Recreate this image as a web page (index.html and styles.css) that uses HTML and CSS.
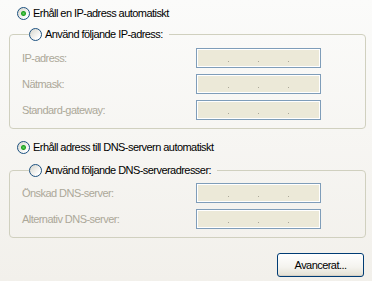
FILE: index.html
```html
<!DOCTYPE html>
<html lang="sv">
<head>
  <meta charset="UTF-8" />
  <title>Egenskaper för Internet Protocol (TCP/IP)</title>
  <link rel="stylesheet" href="styles.css">
</head>
<body>
  <div class="page">
    <label class="opt top"><input type="radio" name="ip" checked> Erhåll en IP-adress automatiskt</label>

    <fieldset class="group first">
      <legend><label class="opt"><input type="radio" name="ip"> Använd följande IP-adress:</label></legend>
      <div class="row"><span class="lbl">IP-adress:</span><span class="ipbox"><i></i><i></i><i></i></span></div>
      <div class="row"><span class="lbl">Nätmask:</span><span class="ipbox"><i></i><i></i><i></i></span></div>
      <div class="row"><span class="lbl">Standard-gateway:</span><span class="ipbox"><i></i><i></i><i></i></span></div>
    </fieldset>

    <label class="opt mid"><input type="radio" name="dns" checked> Erhåll adress till DNS-servern automatiskt</label>

    <fieldset class="group second">
      <legend><label class="opt"><input type="radio" name="dns"> Använd följande DNS-serveradresser:</label></legend>
      <div class="row"><span class="lbl">Önskad DNS-server:</span><span class="ipbox"><i></i><i></i><i></i></span></div>
      <div class="row"><span class="lbl">Alternativ DNS-server:</span><span class="ipbox"><i></i><i></i><i></i></span></div>
    </fieldset>

    <div class="actions">
      <button class="btn">Avancerat...</button>
    </div>
  </div>
</body>
</html>
```

FILE: styles.css
```css
html, body {
  margin: 0;
  height: 100%;
}
body {
  font-family: "Liberation Sans", Arial, sans-serif;
  font-size: 11px;
  letter-spacing: -0.55px;
  color: #000;
  background: linear-gradient(#fbfbfa, #f2f0eb);
}
.page {
  width: 372px;
  height: 281px;
  box-sizing: border-box;
  padding: 7px 6px 0 9px;
}
.opt {
  display: flex;
  align-items: center;
  height: 13px;
  line-height: 13px;
  white-space: nowrap;
}
.opt.top, .opt.mid {
  margin-left: 8px;
}
.opt.mid {
  margin-top: 12px;
}
.opt input {
  appearance: none;
  -webkit-appearance: none;
  width: 13px;
  height: 13px;
  margin: 0 3px 0 0;
  box-sizing: border-box;
  border: 1px solid #1c5180;
  border-radius: 50%;
  background: linear-gradient(135deg, #d6d5cc, #fff 80%);
}
.opt input:checked {
  background: radial-gradient(circle, #5fd35f 0, #21a121 2px, transparent 3px),
              linear-gradient(135deg, #d6d5cc, #fff 80%);
}

/* grupprutor */
.group {
  margin: 8px 0 0 0;
  padding: 7px 0 8px 12px;
  border: 1px solid #d0d0bf;
  border-radius: 4px;
  min-width: 0;
}
.group legend {
  margin-left: 7px;
  padding: 0 6px 0 0;
  height: 13px;
}
.group.second {
  margin-top: 10px;
  padding-top: 6px;
}
.row {
  display: grid;
  grid-template-columns: 174px 125px;
  align-items: center;
}
.row + .row {
  margin-top: 6px;
}
.lbl {
  color: #aca899;
}
.ipbox {
  display: flex;
  gap: 29px;
  height: 20px;
  box-sizing: border-box;
  padding: 12px 0 0 31px;
  border: 1px solid #7f9db9;
  background: #ece9d8;
  box-shadow: inset 0 0 0 1px #fff;
}
.ipbox i {
  width: 1px;
  height: 1px;
  background: #aca899;
}

/* knapp */
.actions {
  display: flex;
  justify-content: flex-end;
  margin-top: 15px;
  padding-right: 2px;
}
.btn {
  width: 87px;
  height: 24px;
  padding: 0;
  font: inherit;
  letter-spacing: inherit;
  color: #000;
  border: 1px solid #003c74;
  border-radius: 3px;
  background: linear-gradient(#fff, #f4f3ee 60%, #e3e0d3);
  box-shadow: inset 0 -1px 0 #d6d0c5;
}
```
